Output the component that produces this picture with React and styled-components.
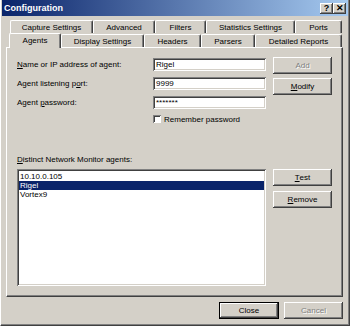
import React from 'react';
import styled, { createGlobalStyle } from 'styled-components';

const FACE = '#d4d0c8';
const SHADOW = '#808080';
const DARK = '#404040';

const GlobalStyle = createGlobalStyle`
  html, body {
    margin: 0;
    padding: 0;
    background: ${FACE};
  }
  * {
    box-sizing: border-box;
  }
`;

const Window = styled.div`
  width: 350px;
  height: 326px;
  background: ${FACE};
  font-family: "Liberation Sans", Arial, sans-serif;
  font-size: 8px;
  color: #000;
  display: flex;
  flex-direction: column;
  border-left: 1px solid #fff;
  border-right: 1px solid ${DARK};
  border-bottom: 1px solid ${DARK};
  box-shadow: inset -1px -1px ${SHADOW};
  overflow: hidden;
`;

const TitleBar = styled.div`
  height: 16px;
  margin: 0 1px 0 1px;
  padding: 0 2px 0 2px;
  display: flex;
  align-items: center;
  justify-content: space-between;
  background: linear-gradient(to right, #0a246a, #a6caf0);
`;

const Title = styled.span`
  color: #fff;
  font-weight: bold;
  font-size: 9px;
`;

const TitleButtons = styled.div`
  display: flex;
`;

const TitleButton = styled.div`
  width: 13px;
  height: 11px;
  background: ${FACE};
  display: flex;
  align-items: center;
  justify-content: center;
  box-shadow: inset -1px -1px ${DARK}, inset 1px 1px #fff, inset -2px -2px ${SHADOW};
  font-weight: bold;
  font-size: 9px;
  line-height: 1;
`;

const Body = styled.div`
  flex: 1;
  display: flex;
  flex-direction: column;
  padding: 5px 6px 0 5px;
`;

const Tabs = styled.div`
  display: flex;
  flex-direction: column;
`;

const TabRow = styled.div`
  display: flex;
  height: ${({ front }) => (front ? '14px' : '12px')};
  padding-left: ${({ indent }) => indent}px;
  align-items: flex-end;
  position: relative;
  z-index: ${({ front }) => (front ? 2 : 1)};
`;

const Tab = styled.div`
  width: ${({ w }) => w}px;
  height: ${({ selected }) => (selected ? '15px' : '13px')};
  margin-bottom: ${({ selected }) => (selected ? '-1px' : '0')};
  display: flex;
  align-items: center;
  justify-content: center;
  padding-bottom: ${({ selected }) => (selected ? '2px' : '0')};
  background: ${FACE};
  border-top: 1px solid #fff;
  border-left: 1px solid #fff;
  border-right: 1px solid ${DARK};
  border-radius: 2px 2px 0 0;
  box-shadow: inset -1px 0 ${SHADOW};
  white-space: nowrap;
`;

const Panel = styled.div`
  width: 337px;
  height: 250px;
  border-top: 1px solid #fff;
  border-left: 1px solid #fff;
  border-right: 1px solid ${DARK};
  border-bottom: 1px solid ${DARK};
  box-shadow: inset -1px -1px ${SHADOW};
  padding: 9px 10px 0 10px;
  display: flex;
  flex-direction: column;
`;

const TopSection = styled.div`
  display: flex;
  gap: 7px;
  height: 98px;
`;

const Fields = styled.div`
  width: 249px;
  padding-top: 1px;
  display: flex;
  flex-direction: column;
  gap: 6px;
`;

const FieldRow = styled.div`
  display: flex;
  align-items: center;
  height: 13px;
`;

const Label = styled.span`
  width: 136px;
  white-space: nowrap;
`;

const TextBox = styled.div`
  width: 113px;
  height: 13px;
  background: #fff;
  padding: 2px 3px 0;
  line-height: 9px;
  box-shadow: inset 1px 1px ${SHADOW}, inset -1px -1px #fff, inset 2px 2px ${DARK}, inset -2px -2px ${FACE};
  white-space: nowrap;
  overflow: hidden;
`;

const CheckRow = styled.div`
  display: flex;
  align-items: center;
  gap: 3px;
  margin-left: 136px;
  height: 8px;
`;

const CheckBox = styled.div`
  width: 8px;
  height: 8px;
  background: #fff;
  box-shadow: inset 1px 1px ${SHADOW}, inset -1px -1px #fff, inset 2px 2px ${DARK};
`;

const ButtonStack = styled.div`
  display: flex;
  flex-direction: column;
  gap: ${({ gap }) => gap}px;
`;

const Button = styled.div`
  width: ${({ w }) => w || 59}px;
  height: 17px;
  background: ${FACE};
  display: flex;
  align-items: center;
  justify-content: center;
  box-shadow: ${({ primary }) => (primary
    ? `inset 0 0 0 1px #000, inset -2px -2px ${DARK}, inset 2px 2px #fff, inset -3px -3px ${SHADOW}`
    : `inset -1px -1px ${DARK}, inset 1px 1px #fff, inset -2px -2px ${SHADOW}`)};
  color: ${({ disabled }) => (disabled ? SHADOW : '#000')};
  text-shadow: ${({ disabled }) => (disabled ? '1px 1px #fff' : 'none')};
  white-space: nowrap;
`;

const ListLabel = styled.div`
  height: 10px;
  line-height: 10px;
  margin-bottom: 4px;
`;

const ListSection = styled.div`
  display: flex;
  gap: 7px;
`;

const ListBox = styled.div`
  width: 249px;
  height: 117px;
  background: #fff;
  padding: 3px 2px;
  box-shadow: inset 1px 1px ${SHADOW}, inset -1px -1px #fff, inset 2px 2px ${DARK}, inset -2px -2px ${FACE};
`;

const ListItem = styled.div`
  height: 9px;
  line-height: 9px;
  padding-left: 1px;
  background: ${({ selected }) => (selected ? '#0a246a' : 'transparent')};
  color: ${({ selected }) => (selected ? '#fff' : '#000')};
`;

const Footer = styled.div`
  display: flex;
  justify-content: flex-end;
  gap: 5px;
  margin-top: 5px;
`;

const backTabs = [
  { label: 'Capture Settings', w: 83 },
  { label: 'Advanced', w: 62 },
  { label: 'Filters', w: 51 },
  { label: 'Statistics Settings', w: 89 },
  { label: 'Ports', w: 47 },
];

const frontTabs = [
  { label: 'Agents', w: 52, selected: true },
  { label: 'Display Settings', w: 83 },
  { label: 'Headers', w: 57 },
  { label: 'Parsers', w: 54 },
  { label: 'Detailed Reports', w: 87 },
];

const agents = ['10.10.0.105', 'Rigel', 'Vortex9'];

export default function App() {
  return (
    <>
      <GlobalStyle />
      <Window>
        <TitleBar>
          <Title>Configuration</Title>
          <TitleButtons>
            <TitleButton>?</TitleButton>
            <TitleButton>✕</TitleButton>
          </TitleButtons>
        </TitleBar>
        <Body>
          <Tabs>
            <TabRow indent={4}>
              {backTabs.map(({ label, w }) => (
                <Tab key={label} w={w}>{label}</Tab>
              ))}
            </TabRow>
            <TabRow indent={3} front>
              {frontTabs.map(({ label, w, selected }) => (
                <Tab key={label} w={w} selected={selected}>{label}</Tab>
              ))}
            </TabRow>
          </Tabs>
          <Panel>
            <TopSection>
              <Fields>
                <FieldRow>
                  <Label><u>N</u>ame or IP address of agent:</Label>
                  <TextBox>Rigel</TextBox>
                </FieldRow>
                <FieldRow>
                  <Label>Agent listening p<u>o</u>rt:</Label>
                  <TextBox>9999</TextBox>
                </FieldRow>
                <FieldRow>
                  <Label>Agent <u>p</u>assword:</Label>
                  <TextBox>*******</TextBox>
                </FieldRow>
                <CheckRow>
                  <CheckBox />
                  <span>Remember password</span>
                </CheckRow>
              </Fields>
              <ButtonStack gap={4}>
                <Button disabled>Add</Button>
                <Button><u>M</u>odify</Button>
              </ButtonStack>
            </TopSection>
            <ListLabel><u>D</u>istinct Network Monitor agents:</ListLabel>
            <ListSection>
              <ListBox>
                {agents.map((a) => (
                  <ListItem key={a} selected={a === 'Rigel'}>{a}</ListItem>
                ))}
              </ListBox>
              <ButtonStack gap={5}>
                <Button><u>T</u>est</Button>
                <Button><u>R</u>emove</Button>
              </ButtonStack>
            </ListSection>
          </Panel>
          <Footer>
            <Button primary w={60}>Close</Button>
            <Button disabled>Cancel</Button>
          </Footer>
        </Body>
      </Window>
    </>
  );
}
